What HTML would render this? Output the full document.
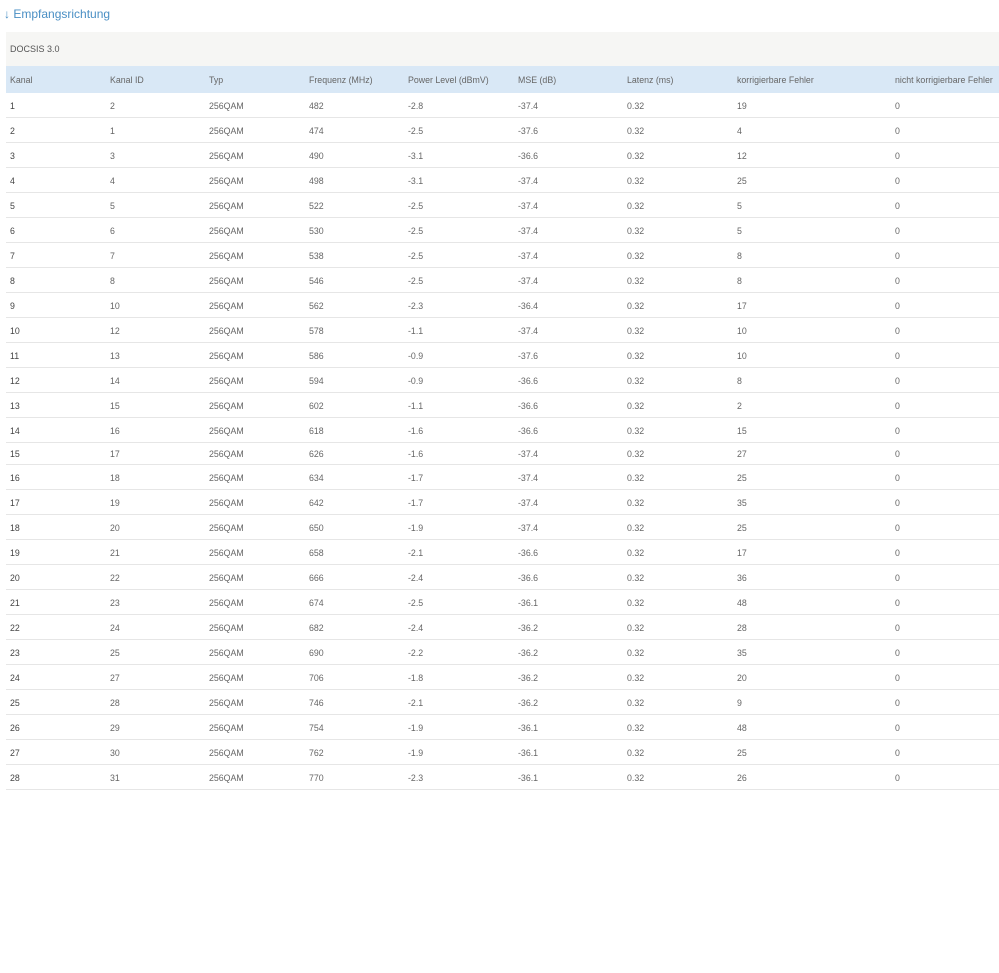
<!DOCTYPE html>
<html><head><meta charset="utf-8"><style>
body{margin:0;background:#fff;font-family:"Liberation Sans",sans-serif;width:999px;height:973px;overflow:hidden;position:relative}
h1{position:absolute;left:4px;top:7px;margin:0;font-weight:normal;font-size:12px;color:#4a8fc4}
.box{position:absolute;left:6px;top:32px;width:993px}
.cap{height:34px;background:#f6f6f4;font-size:9px;color:#555;line-height:34px;padding-left:4px}
table{border-collapse:collapse;table-layout:fixed;width:993px;font-size:8.8px;color:#666}
td,th{padding:0 0 0 4px;text-align:left;font-weight:normal;white-space:nowrap;overflow:hidden;border-bottom:1px solid #e6e6e6}
th{background:#d9e8f6;height:27px;color:#666;border:none}
td{height:23px;padding-top:1px}
td:first-child{color:#444}
tr.s td{height:20px}
</style></head><body>
<h1>↓ Empfangsrichtung</h1>
<div class="box">
<div class="cap">DOCSIS 3.0</div>
<table>
<colgroup><col style="width:100px"><col style="width:99px"><col style="width:100px"><col style="width:99px"><col style="width:110px"><col style="width:109px"><col style="width:110px"><col style="width:158px"><col style="width:108px"></colgroup>
<tr><th>Kanal</th><th>Kanal ID</th><th>Typ</th><th>Frequenz (MHz)</th><th>Power Level (dBmV)</th><th>MSE (dB)</th><th>Latenz (ms)</th><th>korrigierbare Fehler</th><th>nicht korrigierbare Fehler</th></tr>
<tr><td>1</td><td>2</td><td>256QAM</td><td>482</td><td>-2.8</td><td>-37.4</td><td>0.32</td><td>19</td><td>0</td></tr>
<tr><td>2</td><td>1</td><td>256QAM</td><td>474</td><td>-2.5</td><td>-37.6</td><td>0.32</td><td>4</td><td>0</td></tr>
<tr><td>3</td><td>3</td><td>256QAM</td><td>490</td><td>-3.1</td><td>-36.6</td><td>0.32</td><td>12</td><td>0</td></tr>
<tr><td>4</td><td>4</td><td>256QAM</td><td>498</td><td>-3.1</td><td>-37.4</td><td>0.32</td><td>25</td><td>0</td></tr>
<tr><td>5</td><td>5</td><td>256QAM</td><td>522</td><td>-2.5</td><td>-37.4</td><td>0.32</td><td>5</td><td>0</td></tr>
<tr><td>6</td><td>6</td><td>256QAM</td><td>530</td><td>-2.5</td><td>-37.4</td><td>0.32</td><td>5</td><td>0</td></tr>
<tr><td>7</td><td>7</td><td>256QAM</td><td>538</td><td>-2.5</td><td>-37.4</td><td>0.32</td><td>8</td><td>0</td></tr>
<tr><td>8</td><td>8</td><td>256QAM</td><td>546</td><td>-2.5</td><td>-37.4</td><td>0.32</td><td>8</td><td>0</td></tr>
<tr><td>9</td><td>10</td><td>256QAM</td><td>562</td><td>-2.3</td><td>-36.4</td><td>0.32</td><td>17</td><td>0</td></tr>
<tr><td>10</td><td>12</td><td>256QAM</td><td>578</td><td>-1.1</td><td>-37.4</td><td>0.32</td><td>10</td><td>0</td></tr>
<tr><td>11</td><td>13</td><td>256QAM</td><td>586</td><td>-0.9</td><td>-37.6</td><td>0.32</td><td>10</td><td>0</td></tr>
<tr><td>12</td><td>14</td><td>256QAM</td><td>594</td><td>-0.9</td><td>-36.6</td><td>0.32</td><td>8</td><td>0</td></tr>
<tr><td>13</td><td>15</td><td>256QAM</td><td>602</td><td>-1.1</td><td>-36.6</td><td>0.32</td><td>2</td><td>0</td></tr>
<tr><td>14</td><td>16</td><td>256QAM</td><td>618</td><td>-1.6</td><td>-36.6</td><td>0.32</td><td>15</td><td>0</td></tr>
<tr class="s"><td>15</td><td>17</td><td>256QAM</td><td>626</td><td>-1.6</td><td>-37.4</td><td>0.32</td><td>27</td><td>0</td></tr>
<tr><td>16</td><td>18</td><td>256QAM</td><td>634</td><td>-1.7</td><td>-37.4</td><td>0.32</td><td>25</td><td>0</td></tr>
<tr><td>17</td><td>19</td><td>256QAM</td><td>642</td><td>-1.7</td><td>-37.4</td><td>0.32</td><td>35</td><td>0</td></tr>
<tr><td>18</td><td>20</td><td>256QAM</td><td>650</td><td>-1.9</td><td>-37.4</td><td>0.32</td><td>25</td><td>0</td></tr>
<tr><td>19</td><td>21</td><td>256QAM</td><td>658</td><td>-2.1</td><td>-36.6</td><td>0.32</td><td>17</td><td>0</td></tr>
<tr><td>20</td><td>22</td><td>256QAM</td><td>666</td><td>-2.4</td><td>-36.6</td><td>0.32</td><td>36</td><td>0</td></tr>
<tr><td>21</td><td>23</td><td>256QAM</td><td>674</td><td>-2.5</td><td>-36.1</td><td>0.32</td><td>48</td><td>0</td></tr>
<tr><td>22</td><td>24</td><td>256QAM</td><td>682</td><td>-2.4</td><td>-36.2</td><td>0.32</td><td>28</td><td>0</td></tr>
<tr><td>23</td><td>25</td><td>256QAM</td><td>690</td><td>-2.2</td><td>-36.2</td><td>0.32</td><td>35</td><td>0</td></tr>
<tr><td>24</td><td>27</td><td>256QAM</td><td>706</td><td>-1.8</td><td>-36.2</td><td>0.32</td><td>20</td><td>0</td></tr>
<tr><td>25</td><td>28</td><td>256QAM</td><td>746</td><td>-2.1</td><td>-36.2</td><td>0.32</td><td>9</td><td>0</td></tr>
<tr><td>26</td><td>29</td><td>256QAM</td><td>754</td><td>-1.9</td><td>-36.1</td><td>0.32</td><td>48</td><td>0</td></tr>
<tr><td>27</td><td>30</td><td>256QAM</td><td>762</td><td>-1.9</td><td>-36.1</td><td>0.32</td><td>25</td><td>0</td></tr>
<tr><td>28</td><td>31</td><td>256QAM</td><td>770</td><td>-2.3</td><td>-36.1</td><td>0.32</td><td>26</td><td>0</td></tr>
</table>
</div>
</body></html>
